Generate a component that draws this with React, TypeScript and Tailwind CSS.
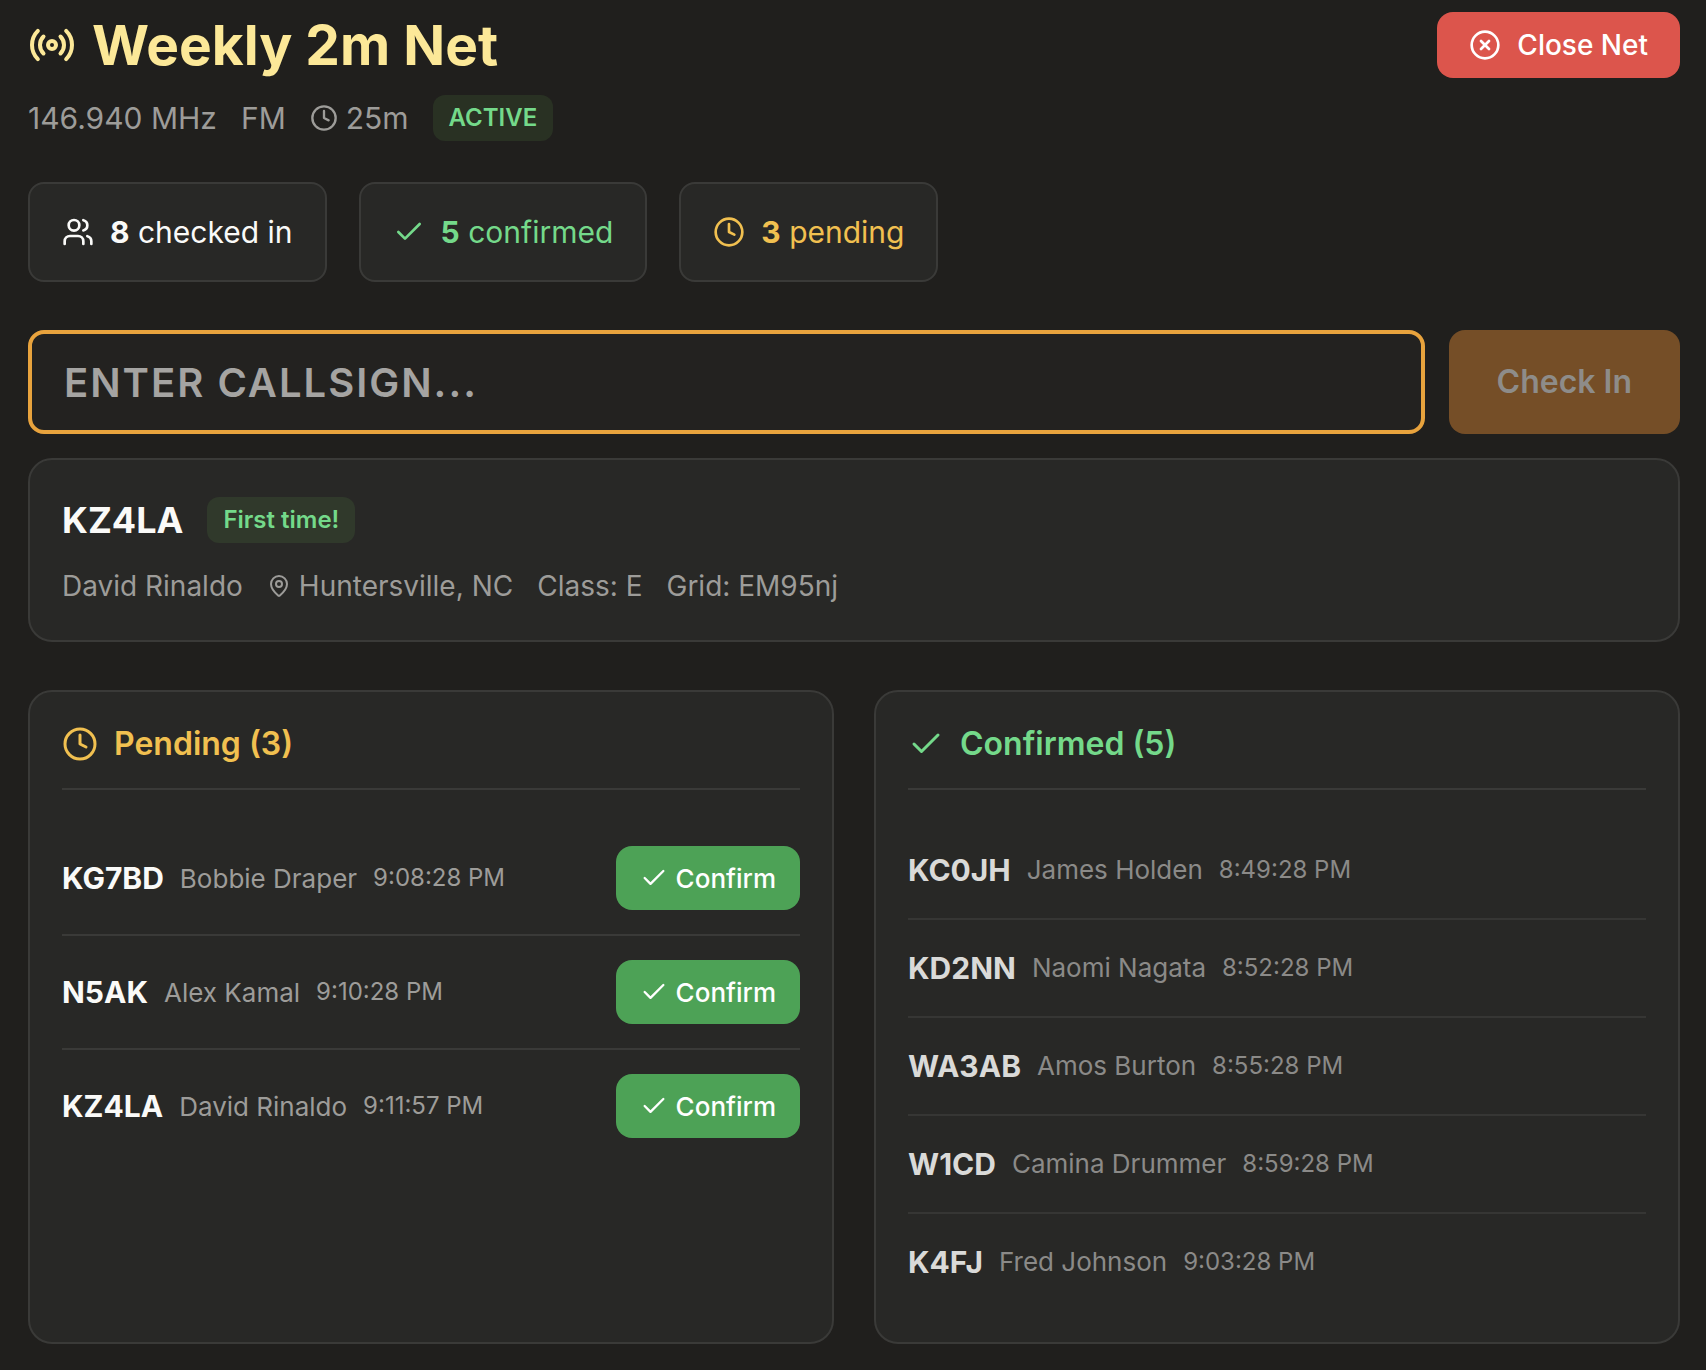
import React from 'react';
import { Check, CircleX, Clock, MapPin, Radio, Users } from 'lucide-react';

interface CheckIn {
  callsign: string;
  name: string;
  time: string;
}

const pending: CheckIn[] = [
  { callsign: 'KG7BD', name: 'Bobbie Draper', time: '9:08:28 PM' },
  { callsign: 'N5AK', name: 'Alex Kamal', time: '9:10:28 PM' },
  { callsign: 'KZ4LA', name: 'David Rinaldo', time: '9:11:57 PM' },
];

const confirmed: CheckIn[] = [
  { callsign: 'KC0JH', name: 'James Holden', time: '8:49:28 PM' },
  { callsign: 'KD2NN', name: 'Naomi Nagata', time: '8:52:28 PM' },
  { callsign: 'WA3AB', name: 'Amos Burton', time: '8:55:28 PM' },
  { callsign: 'W1CD', name: 'Camina Drummer', time: '8:59:28 PM' },
  { callsign: 'K4FJ', name: 'Fred Johnson', time: '9:03:28 PM' },
];

const Badge = ({ children }: { children: React.ReactNode }) => (
  <span className="rounded-xl bg-[#6bb84f]/12 px-4 text-2xl leading-[46px] font-semibold text-[#74d98a]">
    {children}
  </span>
);

const Stat = ({ icon, count, label, color }: { icon: React.ReactNode; count: number; label: string; color: string }) => (
  <div className={`flex h-[100px] items-center gap-4 rounded-2xl border-2 border-[#3a3a38] bg-[#282826] px-8 text-[30px] ${color}`}>
    {icon}
    <span><strong className="font-bold">{count}</strong> {label}</span>
  </div>
);

const Panel = ({ icon, title, color, children }: { icon: React.ReactNode; title: string; color: string; children: React.ReactNode }) => (
  <section className="rounded-3xl border-2 border-[#3a3a38] bg-[#282826] p-8">
    <h2 className={`mb-8 flex items-center gap-4 border-b-2 border-[#3a3a38] pb-6 text-[32px] leading-10 font-semibold ${color}`}>
      {icon}
      {title}
    </h2>
    <ul>{children}</ul>
  </section>
);

const App = () => {
  return (
    <main className="min-h-screen bg-[#201f1d] pt-3 pr-[26px] pb-[26px] pl-7 font-[Inter,sans-serif] text-[#fafaf8]">
      <header className="mb-[41px] flex items-start justify-between">
        <div>
          <h1 className="flex items-center gap-4 text-[55px] leading-[66px] font-bold text-[#fce898]">
            <Radio size={48} />
            Weekly 2m Net
          </h1>
          <div className="mt-[17px] flex items-center gap-6 text-[30px] leading-[46px] text-[#9d9c99]">
            <span>146.940 MHz</span>
            <span>FM</span>
            <span className="flex items-center gap-2"><Clock size={28} /> 25m</span>
            <Badge>ACTIVE</Badge>
          </div>
        </div>
        <button type="button" className="flex h-[66px] items-center gap-4 rounded-2xl bg-[#dc554c] px-8 text-[28px] font-medium text-white">
          <CircleX size={32} />
          Close Net
        </button>
      </header>

      {/* Totals */}
      <div className="mb-12 flex gap-8">
        <Stat icon={<Users size={32} />} count={8} label="checked in" color="text-[#fafaf8]" />
        <Stat icon={<Check size={32} />} count={5} label="confirmed" color="text-[#74d98a]" />
        <Stat icon={<Clock size={32} />} count={3} label="pending" color="text-[#f1c050]" />
      </div>

      {/* Check-in form */}
      <form className="flex gap-6" onSubmit={e => e.preventDefault()}>
        <input
          type="text"
          aria-label="Callsign"
          placeholder="ENTER CALLSIGN..."
          className="h-[104px] min-w-0 flex-1 rounded-2xl border-4 border-[#e8a33d] bg-[#232220] px-8 text-[40px] font-semibold tracking-wider uppercase outline-none placeholder:text-[#a5a4a2]"
        />
        <button type="submit" disabled className="rounded-2xl bg-[#754e27] px-12 text-[32px] font-semibold text-[#8e8c89]">
          Check In
        </button>
      </form>

      {/* Callsign lookup */}
      <section className="mt-6 rounded-3xl border-2 border-[#3a3a38] bg-[#282826] p-8">
        <div className="flex items-center gap-6">
          <h2 className="text-[36px] leading-[56px] font-bold">KZ4LA</h2>
          <Badge>First time!</Badge>
        </div>
        <div className="mt-4 flex items-center gap-6 text-[28px] leading-[44px] text-[#9d9c99]">
          <span>David Rinaldo</span>
          <span className="flex items-center gap-2"><MapPin size={24} /> Huntersville, NC</span>
          <span>Class: E</span>
          <span>Grid: EM95nj</span>
        </div>
      </section>

      <div className="mt-12 grid grid-cols-2 gap-10">
        <Panel icon={<Clock size={36} />} title={`Pending (${pending.length})`} color="text-[#f1c050]">
          {pending.map(c => (
            <li key={c.callsign} className="flex items-center gap-4 border-b-2 border-[#3a3a38] py-6 last:border-b-0">
              <span className="text-[30px] font-bold">{c.callsign}</span>
              <span className="text-[26px] text-[#9d9c99]">{c.name}</span>
              <span className="text-2xl text-[#9d9c99]">{c.time}</span>
              <button type="button" className="ml-auto flex h-16 items-center gap-2 rounded-2xl bg-[#4da256] px-6 text-[26px] font-medium text-white">
                <Check size={28} />
                Confirm
              </button>
            </li>
          ))}
        </Panel>
        <Panel icon={<Check size={36} />} title={`Confirmed (${confirmed.length})`} color="text-[#74d98a]">
          {confirmed.map(c => (
            <li key={c.callsign} className="flex items-center gap-4 border-b-2 border-[#363634] py-6 leading-[48px] last:border-b-0">
              <span className="text-[30px] font-bold text-[#dadad8]">{c.callsign}</span>
              <span className="text-[26px] text-[#8b8a88]">{c.name}</span>
              <span className="text-2xl text-[#8b8a88]">{c.time}</span>
            </li>
          ))}
        </Panel>
      </div>
    </main>
  );
};

export default App;
